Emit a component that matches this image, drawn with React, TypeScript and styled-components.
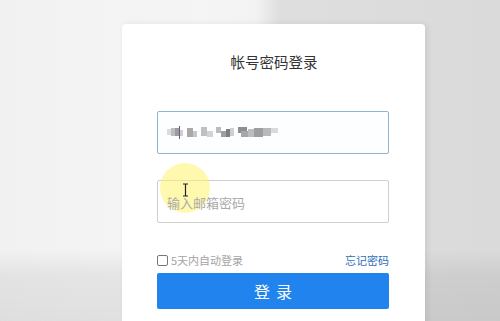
import React from "react";
import styled, { createGlobalStyle } from "styled-components";

const Global = createGlobalStyle`
  html, body { margin: 0; padding: 0; }
  body { font-family: "Noto Sans CJK SC", "Noto Sans", sans-serif; }
`;

const Page = styled.div`
  position: relative;
  width: 500px;
  height: 321px;
  overflow: hidden;
  box-sizing: border-box;
  padding: 24px 0 0 122px;
  display: flex;
  align-items: flex-start;
  background:
    linear-gradient(to bottom, rgba(0,0,0,0) 0, rgba(0,0,0,0) 250px, rgba(0,0,0,0.06) 275px, rgba(0,0,0,0.08) 321px),
    linear-gradient(to right, #f1f1f1 0, #f5f5f5 200px, #f3f3f3 255px, #dedede 280px, #dadada 100%);
`;

const Card = styled.div`
  width: 303px;
  height: 320px;
  background: #fff;
  border-radius: 4px 4px 0 0;
  box-shadow: 2px 0 6px rgba(0,0,0,0.08);
  box-sizing: border-box;
  padding: 29px 36px 0 35px;
  display: flex;
  flex-direction: column;
  position: relative;
  z-index: 1;
`;

const Title = styled.div`
  text-align: center;
  font-size: 14.5px;
  line-height: 17px;
  color: #333;
  padding-left: 2px;
`;

const Field = styled.div<{ $focus?: boolean }>`
  position: relative;
  height: 43px;
  box-sizing: border-box;
  border: 1px solid ${(p) => (p.$focus ? "#8fb4d2" : "#cfcfcf")};
  border-radius: 2px;
  background: ${(p) => (p.$focus ? "#fdfeff" : "#fff")};
  margin-top: ${(p) => (p.$focus ? "41px" : "26px")};
  display: flex;
  align-items: center;
  padding-left: 9px;
`;

const Placeholder = styled.span`
  font-size: 13px;
  color: #aaa;
  position: relative;
  z-index: 2;
  margin-top: 1px;
`;

const Highlight = styled.div`
  position: absolute;
  left: 2px;
  top: -18px;
  width: 50px;
  height: 50px;
  border-radius: 50%;
  background: rgba(255, 242, 110, 0.55);
  z-index: 1;
`;

const Cursor = styled.svg`
  position: absolute;
  left: 24px;
  top: 2px;
  z-index: 3;
`;

const Row = styled.div`
  margin-top: 30px;
  display: flex;
  align-items: center;
  justify-content: space-between;
  height: 14px;
`;

const Check = styled.label`
  display: flex;
  align-items: center;
  gap: 3px;
  font-size: 11px;
  color: #a4a4a4;
`;

const Box = styled.span`
  width: 11px;
  height: 11px;
  border: 1px solid #777;
  border-radius: 2px;
  box-sizing: border-box;
  display: inline-block;
`;

const Link = styled.span`
  font-size: 11px;
  color: #2f6fb8;
`;

const Button = styled.div`
  margin-top: 6px;
  height: 36px;
  border-radius: 2px;
  background: #2183ee;
  color: #fff;
  font-size: 16px;
  display: flex;
  align-items: center;
  justify-content: center;
  letter-spacing: 6px;
  padding-left: 6px;
`;

const mosaic: [number, number, number, number, string][] = [
  [0, 3, 4, 6, "#dcdcdc"],
  [4, 2, 4, 8, "#bdbdbd"],
  [8, 2, 4, 8, "#9f9aa6"],
  [12, 4, 4, 6, "#cfcfcf"],
  [20, 2, 6, 9, "#a9a9a9"],
  [26, 5, 4, 6, "#c6c6c6"],
  [34, 1, 6, 9, "#c0c0c0"],
  [40, 5, 6, 6, "#d3d3d3"],
  [49, 1, 5, 6, "#bcbcbc"],
  [54, 5, 5, 6, "#9f9f9f"],
  [59, 3, 4, 8, "#7f7f7f"],
  [63, 2, 4, 8, "#cfcfcf"],
  [71, 1, 9, 6, "#8e8e8e"],
  [74, 5, 7, 6, "#a7a7a7"],
  [81, 3, 6, 8, "#bdbdbd"],
  [87, 2, 9, 9, "#9e9e9e"],
  [96, 2, 8, 8, "#b9b9b9"],
  [104, 2, 7, 5, "#dadada"],
];

export default function App() {
  return (
    <>
      <Global />
      <Page>
        <Card>
          <Title>帐号密码登录</Title>
          <Field $focus>
            <svg width="112" height="13" viewBox="0 0 112 13">
              {mosaic.map(([x, y, w, h, c], i) => (
                <rect key={i} x={x} y={y} width={w} height={h} fill={c} />
              ))}
              <rect x="12" y="-1" width="1" height="14" fill="#6a5f78" />
            </svg>
          </Field>
          <Field>
            <Highlight />
            <Cursor width="7" height="14" viewBox="0 0 7 14">
              <path d="M1 1h5M3.5 1v12M1 13h5" stroke="#222" strokeWidth="1.2" fill="none" />
            </Cursor>
            <Placeholder>输入邮箱密码</Placeholder>
          </Field>
          <Row>
            <Check>
              <Box />
              5天内自动登录
            </Check>
            <Link>忘记密码</Link>
          </Row>
          <Button>登录</Button>
        </Card>
      </Page>
    </>
  );
}
